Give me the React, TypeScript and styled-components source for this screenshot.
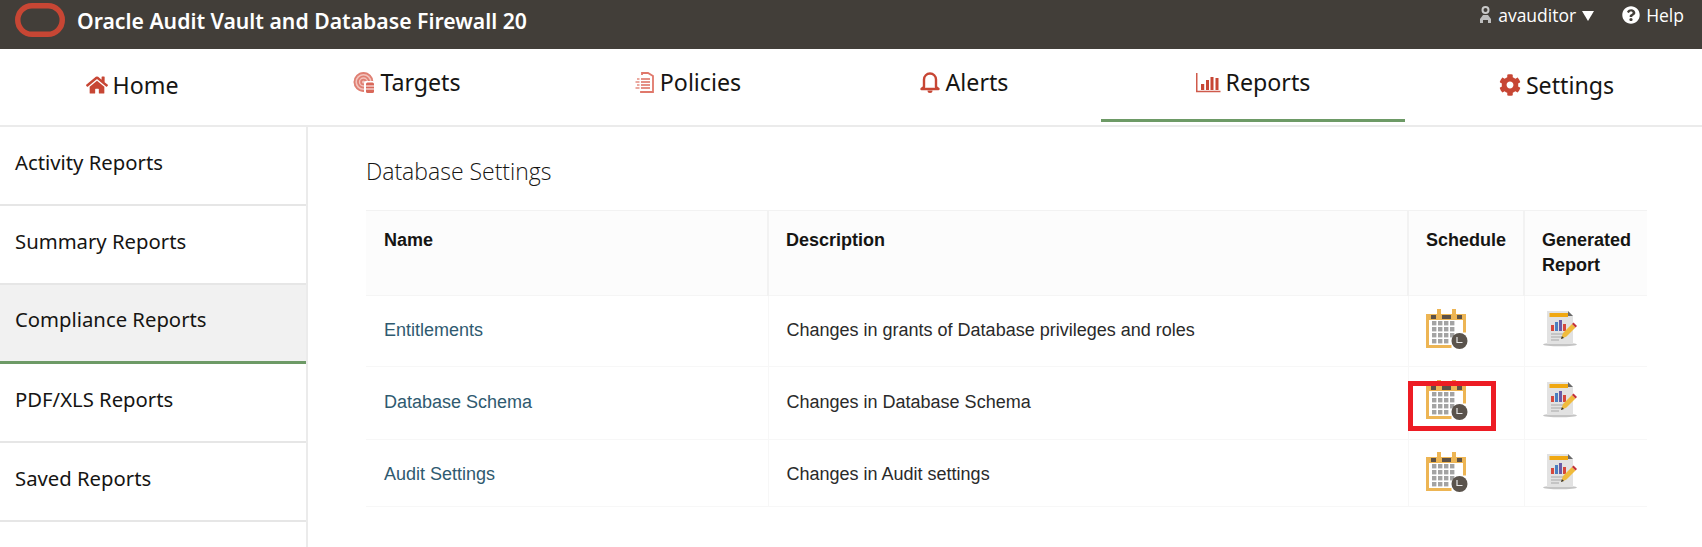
import React from 'react';
import styled, { createGlobalStyle } from 'styled-components';
import { FaHome, FaCog, FaQuestionCircle } from 'react-icons/fa';

const GlobalStyle = createGlobalStyle`
  html, body {
    margin: 0;
    padding: 0;
    background: #fff;
    font-family: "Noto Sans", "Open Sans", sans-serif;
    color: #161513;
  }
  * { box-sizing: border-box; }
`;

const Page = styled.div`
  width: 1702px;
  height: 547px;
  overflow: hidden;
  display: flex;
  flex-direction: column;
`;

const TopBar = styled.header`
  height: 49px;
  flex: none;
  background: #423e39;
  color: #fff;
  display: flex;
  justify-content: space-between;
  padding: 0 18px 0 15px;
`;

const Brand = styled.div`
  display: flex;
  align-items: center;
  gap: 12px;
  padding-bottom: 9px;
`;

const BrandName = styled.span`
  font-size: 21.2px;
  font-weight: 600;
`;

const UserArea = styled.div`
  display: flex;
  align-items: flex-start;
  padding-top: 3px;
  gap: 28px;
  font-family: "Open Sans", sans-serif;
  font-size: 17.5px;
`;

const UserLink = styled.span`
  display: flex;
  align-items: center;
  gap: 6px;
  line-height: 24px;
`;

const Caret = styled.span`
  width: 0;
  height: 0;
  border-left: 6.5px solid transparent;
  border-right: 6.5px solid transparent;
  border-top: 10px solid #fff;
  margin-top: 2px;
`;

const Nav = styled.nav`
  height: 78px;
  flex: none;
  display: grid;
  grid-template-columns: 264px 286px 276px 275px 304px 1fr;
  border-bottom: 2px solid #ebebeb;
  padding-bottom: 3px;
`;

const NavItem = styled.div<{ $active?: boolean; $low?: boolean; $nudge?: number }>`
  display: flex;
  align-items: center;
  justify-content: center;
  gap: 5px;
  font-size: 23.2px;
  padding-top: ${p => (p.$low ? '2px' : '0')};
  padding-bottom: ${p => (p.$low ? '0' : '4px')};
  padding-left: ${p => p.$nudge ?? 0}px;
  border-bottom: 3px solid ${p => (p.$active ? '#6d9a66' : 'transparent')};
  svg { flex: none; }
`;

const Body = styled.div`
  flex: 1;
  display: flex;
  min-height: 0;
`;

const Side = styled.aside`
  width: 308px;
  flex: none;
  border-right: 2px solid #ebebeb;
`;

const SideItem = styled.div<{ $active?: boolean; $accent?: boolean }>`
  height: 79px;
  display: flex;
  align-items: center;
  padding: 0 15px 8px;
  font-size: 20.3px;
  background: ${p => (p.$active ? '#f1f1f1' : '#fff')};
  border-bottom: ${p => (p.$accent ? '3px solid #6d9a66' : '2px solid #e6e6e6')};
`;

const Main = styled.main`
  flex: 1;
  padding: 26px 55px 0 58px;
`;

const Title = styled.h2`
  margin: 0 0 21px;
  font-family: "Open Sans", sans-serif;
  font-size: 23px;
  font-weight: 300;
  line-height: 36px;
`;

const Table = styled.table`
  width: 1281px;
  table-layout: fixed;
  border-collapse: collapse;
  font-family: "Liberation Sans", Arial, sans-serif;
  font-size: 18px;
`;

const HeadCell = styled.th`
  height: 85px;
  padding: 17px 14px 0 18px;
  vertical-align: top;
  text-align: left;
  font-weight: 700;
  line-height: 25px;
  background: #fcfcfc;
  border-top: 1px solid #f2f2f2;
  border-bottom: 1px solid #f5f5f5;
  & + & {
    border-left: 2px solid #f2f2f2;
    padding-left: 17px;
  }
`;

const Cell = styled.td<{ $h: number; $top?: number }>`
  position: relative;
  height: ${p => p.$h}px;
  padding: ${p => p.$top ?? 0}px 18px 1px;
  vertical-align: middle;
  border-bottom: 1px solid #f7f7f7;
  color: #2a2a2a;
  & + & { border-left: 1px solid #f7f7f7; }
`;

const IconCell = styled.td<{ $h: number; $lift: number }>`
  position: relative;
  height: ${p => p.$h}px;
  padding: 0 0 ${p => p.$lift}px;
  vertical-align: middle;
  border-bottom: 1px solid #f7f7f7;
  border-left: 1px solid #f7f7f7;
`;

const ReportLink = styled.a`
  color: #2f5a70;
`;

const IconHolder = styled.div<{ $left: number }>`
  display: flex;
  padding-left: ${p => p.$left}px;
  svg { filter: blur(0.5px); }
`;

const Highlight = styled.div`
  position: absolute;
  left: -1px;
  top: 14px;
  width: 88px;
  height: 50px;
  border: 5px solid #ed1c24;
`;

const OracleLogo = () => (
  <svg width="50" height="34" viewBox="0 0 50 34">
    <rect x="2.75" y="2.75" width="44.500" height="28.500" rx="14.250" fill="none" stroke="#c74634" strokeWidth="5.500" />
  </svg>
);

const PersonIcon = () => (
  <svg width="13" height="18" viewBox="0 0 13 18">
    <circle cx="6.5" cy="4" r="3" fill="none" stroke="#c9c9c9" strokeWidth="2" />
    <path d="M1 17v-4l3-4h5l3 4v4h-3v-3H4v3z" fill="#bdbdbd" />
  </svg>
);

const TargetIcon = () => (
  <svg width="22" height="24" viewBox="0 0 22 24">
    <circle cx="10.500" cy="12" r="10" fill="#f3c4bd" />
    <g fill="none" stroke="#df7f72" strokeWidth="1.800">
      <circle cx="10.500" cy="12" r="9" />
      <circle cx="10.500" cy="12" r="5.600" />
      <circle cx="10.500" cy="12" r="2.400" />
    </g>
    <rect x="11" y="11" width="11" height="13" rx="2" fill="#fff" />
    <rect x="13" y="12.500" width="8" height="10.500" rx="1.500" fill="#d9685a" />
    <path d="M13 16h8M13 19h8" stroke="#fff" strokeWidth="1" />
  </svg>
);

const PolicyIcon = () => (
  <svg width="20" height="24" viewBox="0 0 20 24">
    <path d="M7 5V3h6l5 3v16H6v-1" fill="none" stroke="#e0786b" strokeWidth="1.800" />
    <path d="M6 9h9M6 12h9M6 15h9M6 18h9" stroke="#dc6e60" strokeWidth="1.700" />
    <path d="M2 9h2.500M0.500 12h4M2 15h2.500M0.500 18h4" stroke="#e58d81" strokeWidth="1.700" />
  </svg>
);

const BellIcon = () => (
  <svg width="22" height="24" viewBox="0 0 22 24">
    <path d="M5 17V9.500a6 6 0 0 1 12 0V17l2.500 2h-17z" fill="none" stroke="#c74634" strokeWidth="2.400" strokeLinejoin="round" />
    <path d="M8.500 20.500a2.500 2.500 0 0 0 5 0z" fill="#c74634" />
  </svg>
);

const ChartIcon = () => (
  <svg width="25" height="24" viewBox="0 0 25 24">
    <path d="M.75 3v18.500H24.500" fill="none" stroke="#cf5a4b" strokeWidth="1.500" />
    <path d="M5 14h3.200v6H5zM10 10h3v10h-3zM14.500 7h3v13h-3zM19.500 8h3v12h-3z" fill="#c74634" />
  </svg>
);

const CalendarIcon = () => {
  const cols = [9, 15, 21, 27];
  const rows = [13, 19, 25, 31];
  return (
    <svg width="42" height="40" viewBox="0 0 42 40">
      <path d="M1.500 6.500h37v17M1.500 6.500v31h24" fill="none" stroke="#edb554" strokeWidth="3" />
      <path d="M0 5h40v6H0z" fill="#edb554" />
      <path d="M11 0h4v8h-4zM26 0h4v8h-4z" fill="#edb554" />
      <path d="M5 6h5v4H5zM16 6h9v4h-9zM31 6h5v4h-5z" fill="#5c5147" />
      {rows.map(y =>
        cols.map(x =>
          y > 25 && x > 21 ? null : <rect key={`${x}-${y}`} x={x - 3} y={y - 1} width="4.400" height="4.400" fill="#a3a3a3" />
        )
      )}
      <circle cx="33.500" cy="32" r="8" fill="#5a534c" />
      <path d="M31 28v5.500h5.500" fill="none" stroke="#e8e8e8" strokeWidth="1.200" />
    </svg>
  );
};

const GeneratedIcon = () => (
  <svg width="36" height="38" viewBox="0 0 36 38">
    <ellipse cx="17" cy="34.500" rx="17" ry="1.800" fill="#c4c4c4" />
    <path d="M4 1h21l5 5v28H4z" fill="#e2e2e2" />
    <path d="M25 1l5 5h-5z" fill="#6a6a6a" />
    <path d="M6.500 3H25v4H6.500z" fill="#f0a812" />
    <path d="M8 15h3v6H8z" fill="#d5483c" />
    <path d="M12 12h3v9h-3z" fill="#4a7fc0" />
    <path d="M16 10h3v11h-3z" fill="#6b5ba6" />
    <path d="M20 14h3v7h-3z" fill="#d5483c" />
    <path d="M8 24h13M8 27h10M8 30h8" stroke="#a8a8a8" strokeWidth="1" />
    <path d="M18 29l2-6 9-9 3.500 3.500-9 9z" fill="#f0bb3c" />
    <path d="M29 14l1.500-1.500 3.500 3.500-1.500 1.500z" fill="#c2303a" />
    <path d="M18 29l.8-3 2.200 2z" fill="#333" />
  </svg>
);

const navItems = [
  { label: 'Home', icon: <FaHome size={22} color="#c74634" />, low: true },
  { label: 'Targets', icon: <TargetIcon /> },
  { label: 'Policies', icon: <PolicyIcon /> },
  { label: 'Alerts', icon: <BellIcon /> },
  { label: 'Reports', icon: <ChartIcon />, active: true },
  { label: 'Settings', icon: <FaCog size={22} color="#c74634" />, low: true, nudge: 6 },
];

const sideItems = ['Activity Reports', 'Summary Reports', 'Compliance Reports', 'PDF/XLS Reports', 'Saved Reports'];

const reports = [
  { name: 'Entitlements', description: 'Changes in grants of Database privileges and roles', height: 71, lift: 5 },
  { name: 'Database Schema', description: 'Changes in Database Schema', height: 73, lift: 7, marked: true },
  { name: 'Audit Settings', description: 'Changes in Audit settings', height: 67, lift: 3, top: 4 },
];

const App: React.FC = () => (
  <Page>
    <GlobalStyle />
    <TopBar>
      <Brand>
        <OracleLogo />
        <BrandName>Oracle Audit Vault and Database Firewall 20</BrandName>
      </Brand>
      <UserArea>
        <UserLink>
          <PersonIcon />
          avauditor
          <Caret />
        </UserLink>
        <UserLink>
          <FaQuestionCircle size={18} />
          Help
        </UserLink>
      </UserArea>
    </TopBar>

    <Nav>
      {navItems.map(item => (
        <NavItem key={item.label} $active={item.active} $low={item.low} $nudge={item.nudge}>
          {item.icon}
          {item.label}
        </NavItem>
      ))}
    </Nav>

    <Body>
      <Side>
        {sideItems.map((item, i) => (
          <SideItem key={item} $active={i === 2} $accent={i === 2}>
            {item}
          </SideItem>
        ))}
      </Side>

      <Main>
        <Title>Database Settings</Title>
        <Table>
          <colgroup>
            <col width="402" />
            <col width="640" />
            <col width="116" />
            <col width="123" />
          </colgroup>
          <thead>
            <tr>
              <HeadCell>Name</HeadCell>
              <HeadCell>Description</HeadCell>
              <HeadCell>Schedule</HeadCell>
              <HeadCell>Generated Report</HeadCell>
            </tr>
          </thead>
          <tbody>
            {reports.map(report => (
              <tr key={report.name}>
                <Cell $h={report.height} $top={report.top}>
                  <ReportLink>{report.name}</ReportLink>
                </Cell>
                <Cell $h={report.height} $top={report.top}>{report.description}</Cell>
                <IconCell $h={report.height} $lift={report.lift}>
                  <IconHolder $left={17}>
                    <CalendarIcon />
                  </IconHolder>
                  {report.marked && <Highlight />}
                </IconCell>
                <IconCell $h={report.height} $lift={report.lift}>
                  <IconHolder $left={18}>
                    <GeneratedIcon />
                  </IconHolder>
                </IconCell>
              </tr>
            ))}
          </tbody>
        </Table>
      </Main>
    </Body>
  </Page>
);

export default App;
